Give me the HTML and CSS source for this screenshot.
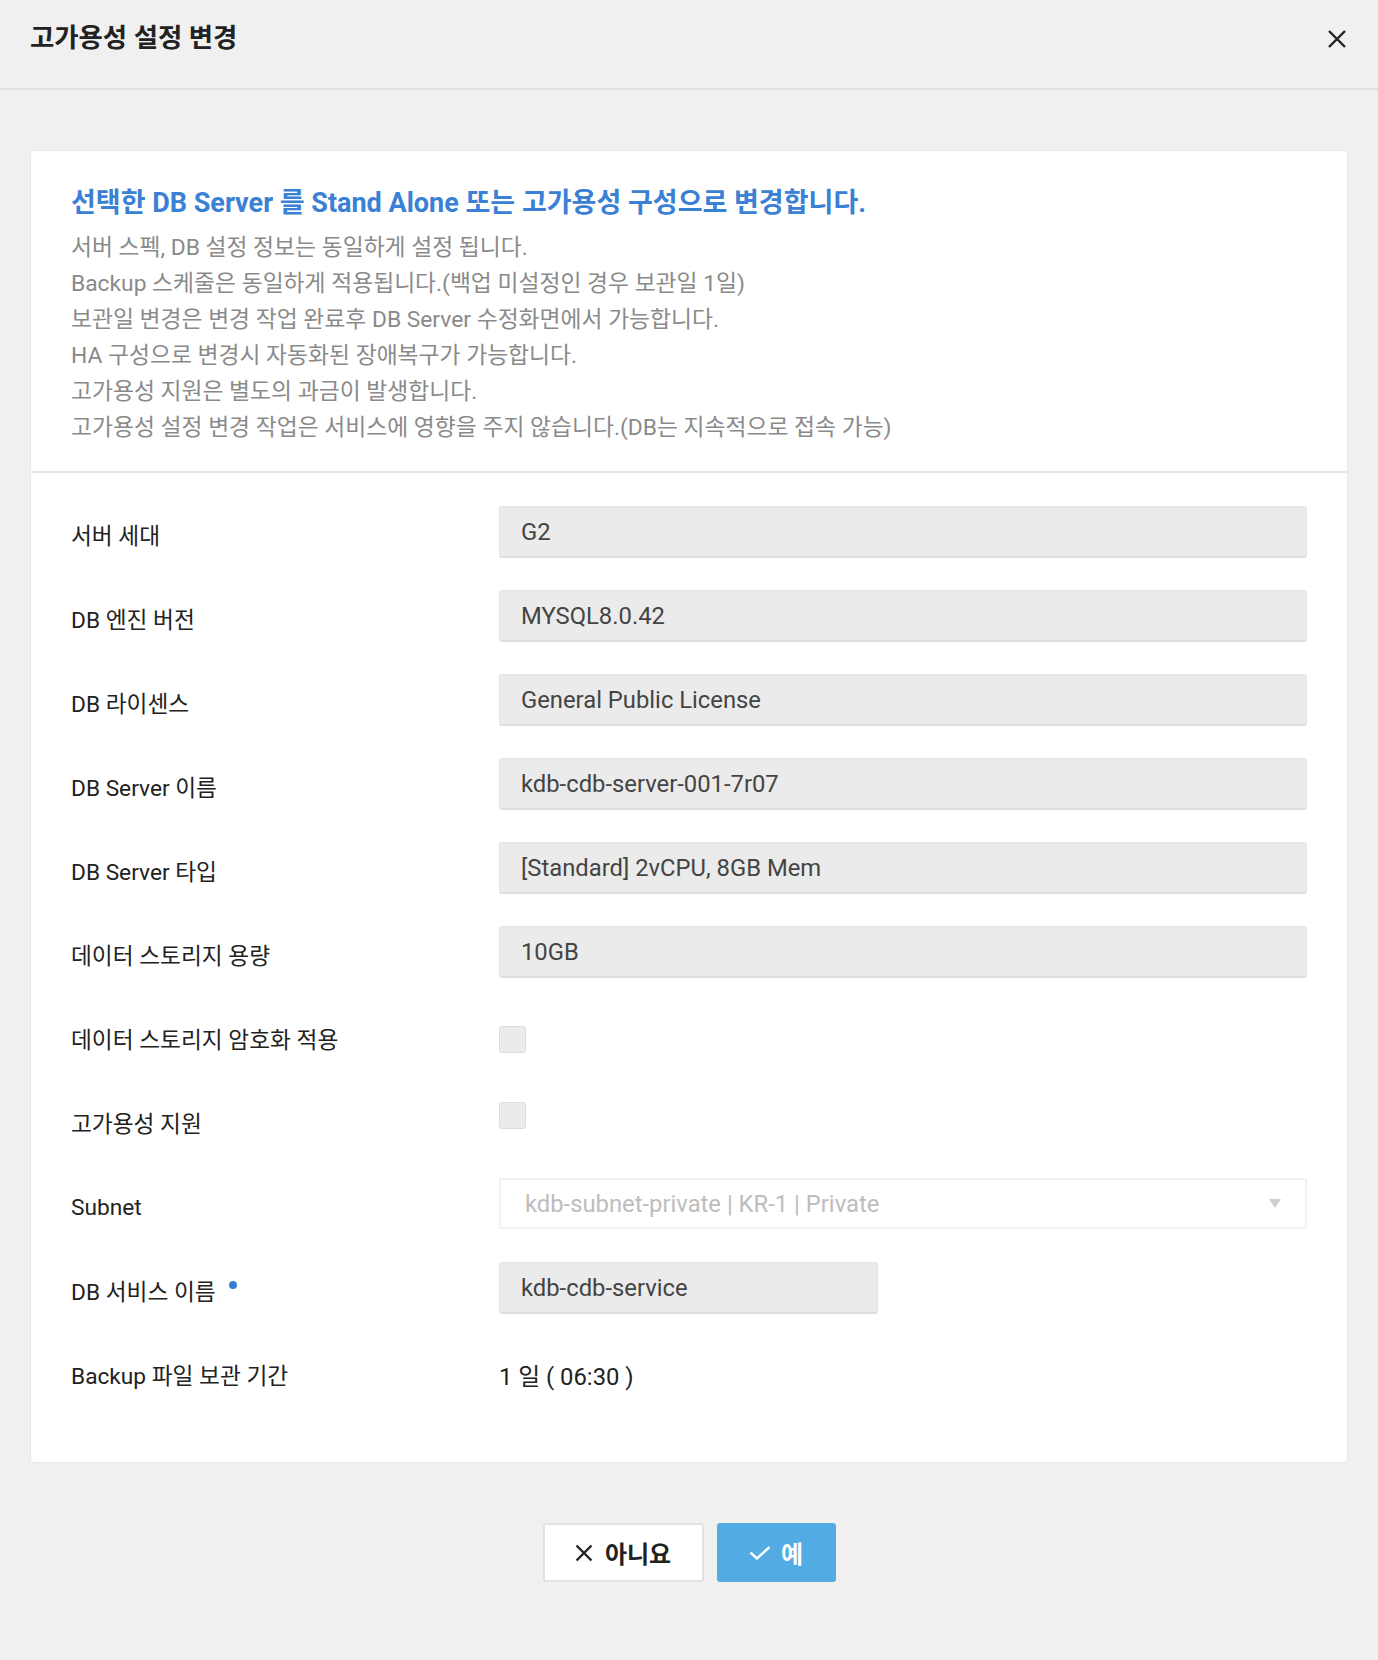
FILE: index.html
```html
<!DOCTYPE html>
<html lang="ko">
<head>
<meta charset="utf-8">
<title>고가용성 설정 변경</title>
<link rel="stylesheet" href="styles.css">
</head>
<body>
<div class="modal">
  <header class="modal-head">
    <h1 class="modal-title">고가용성 설정 변경</h1>
    <button class="close" aria-label="닫기">
      <svg viewBox="0 0 18 18" width="18" height="18"><path d="M1 1L17 17M17 1L1 17" stroke="#222" stroke-width="2.4" fill="none"/></svg>
    </button>
  </header>
  <main class="modal-body">
    <section class="card">
      <div class="card-head">
        <h2 class="notice-title">선택한 DB Server 를 Stand Alone 또는 고가용성 구성으로 변경합니다.</h2>
        <ul class="notice-list">
          <li>서버 스펙, DB 설정 정보는 동일하게 설정 됩니다.</li>
          <li>Backup 스케줄은 동일하게 적용됩니다.(백업 미설정인 경우 보관일 1일)</li>
          <li>보관일 변경은 변경 작업 완료후 DB Server 수정화면에서 가능합니다.</li>
          <li>HA 구성으로 변경시 자동화된 장애복구가 가능합니다.</li>
          <li>고가용성 지원은 별도의 과금이 발생합니다.</li>
          <li>고가용성 설정 변경 작업은 서비스에 영향을 주지 않습니다.(DB는 지속적으로 접속 가능)</li>
        </ul>
      </div>
      <div class="form">
        <div class="row"><div class="label">서버 세대</div><div class="field"><div class="input">G2</div></div></div>
        <div class="row"><div class="label">DB 엔진 버전</div><div class="field"><div class="input">MYSQL8.0.42</div></div></div>
        <div class="row"><div class="label">DB 라이센스</div><div class="field"><div class="input">General Public License</div></div></div>
        <div class="row"><div class="label">DB Server 이름</div><div class="field"><div class="input">kdb-cdb-server-001-7r07</div></div></div>
        <div class="row"><div class="label">DB Server 타입</div><div class="field"><div class="input">[Standard] 2vCPU, 8GB Mem</div></div></div>
        <div class="row"><div class="label">데이터 스토리지 용량</div><div class="field"><div class="input">10GB</div></div></div>
        <div class="row"><div class="label">데이터 스토리지 암호화 적용</div><div class="field field-top"><span class="check check-a"></span></div></div>
        <div class="row"><div class="label">고가용성 지원</div><div class="field field-top"><span class="check check-b"></span></div></div>
        <div class="row"><div class="label label-low">Subnet</div><div class="field"><div class="select"><span>kdb-subnet-private | KR-1 | Private</span><span class="caret"></span></div></div></div>
        <div class="row"><div class="label">DB 서비스 이름<span class="req"></span></div><div class="field"><div class="input input-short">kdb-cdb-service</div></div></div>
        <div class="row"><div class="label label-mid">Backup 파일 보관 기간</div><div class="field"><div class="value">1 일 ( 06:30 )</div></div></div>
      </div>
    </section>
    <div class="actions">
      <button class="btn btn-no">
        <svg viewBox="0 0 18 18" width="18" height="18"><path d="M1.5 1.5L16.5 16.5M16.5 1.5L1.5 16.5" stroke="#222" stroke-width="2.4" fill="none"/></svg>
        <span>아니요</span>
      </button>
      <button class="btn btn-yes">
        <svg viewBox="0 0 22 14" width="22" height="14"><path d="M1.5 6.5L8 12.5L20.5 1" stroke="#fff" stroke-width="2.4" fill="none"/></svg>
        <span>예</span>
      </button>
    </div>
  </main>
</div>
</body>
</html>
```
FILE: styles.css
```css
* { box-sizing: border-box; }
html, body {
  margin: 0;
  padding: 0;
  background: #f0f0f0;
  font-family: Roboto, "Noto Sans CJK KR", sans-serif;
  color: #222;
}
.modal { width: 1378px; min-height: 1660px; }
.modal-head {
  height: 90px;
  border-bottom: 2px solid #e2e2e2;
  display: flex;
  justify-content: space-between;
  align-items: flex-start;
  padding: 20px 30px 0 30px;
}
.modal-title {
  margin: 0;
  font-size: 26.4px;
  line-height: 36px;
  font-weight: 700;
  color: #222;
}
.close {
  border: 0;
  background: none;
  padding: 0;
  margin-top: 10px;
  margin-right: 2px;
  width: 18px;
  height: 18px;
  display: flex;
}
.modal-body { padding: 60px 30px 0 30px; }
.card {
  background: #fff;
  border: 1px solid #e8e8e8;
  border-radius: 4px;
}
.card-head {
  padding: 34px 40px 25px;
  border-bottom: 2px solid #e6e6e6;
}
.notice-title {
  margin: 0 0 9px;
  font-size: 27px;
  line-height: 36px;
  font-weight: 700;
  color: #3a80d4;
}
.notice-list {
  list-style: none;
  margin: 0;
  padding: 0;
  font-size: 22.8px;
  line-height: 36px;
  color: #8a8a8a;
}
.form {
  padding: 33px 40px 64px;
  display: flex;
  flex-direction: column;
  gap: 32px;
}
.row {
  display: grid;
  grid-template-columns: 428px 1fr;
  height: 52px;
}
.label {
  font-size: 22.7px;
  color: #222;
  display: flex;
  align-items: center;
  padding-top: 4px;
}
.label-low { padding-top: 7px; }
.label-mid { padding-top: 5px; }
.req {
  display: inline-block;
  width: 8px;
  height: 8px;
  border-radius: 50%;
  background: #3a7bd5;
  margin-left: 13px;
  margin-top: -10px;
}
.field { display: flex; align-items: center; }
.field-top { align-items: flex-start; }
.input {
  width: 100%;
  height: 52px;
  background: #ebebeb;
  border: 1px solid #e4e4e4;
  border-bottom: 2px solid #dedede;
  border-radius: 3px;
  padding: 0 21px;
  font-size: 23.8px;
  color: #444;
  display: flex;
  align-items: center;
}
.input-short { width: 379px; }
.check {
  width: 27px;
  height: 27px;
  background: #ebebeb;
  border: 1px solid #dcdcdc;
  border-radius: 3px;
}
.check-a { margin-top: 16px; }
.check-b { margin-top: 8px; }
.select {
  width: 100%;
  height: 51px;
  margin-top: -1px;
  background: #fff;
  border: 2px solid #f2f2f2;
  border-radius: 3px;
  padding: 0 24px 0 24px;
  font-size: 23.8px;
  color: #bdbdbd;
  display: flex;
  align-items: center;
  justify-content: space-between;
}
.caret {
  width: 0;
  height: 0;
  border-left: 6px solid transparent;
  border-right: 6px solid transparent;
  border-top: 9px solid #d0d0d0;
}
.value {
  font-size: 23.8px;
  color: #222;
  padding-top: 4px;
}
.actions {
  display: flex;
  justify-content: center;
  gap: 13px;
  padding: 60px 0 0 0;
}
.btn {
  height: 59px;
  border-radius: 3px;
  display: flex;
  align-items: center;
  justify-content: center;
  gap: 12px;
  font-family: Roboto, "Noto Sans CJK KR", sans-serif;
  font-size: 24px;
  font-weight: 700;
  padding: 0;
}
.btn-no {
  width: 161px;
  background: #fff;
  border: 2px solid #e2e2e2;
  color: #222;
}
.btn-yes {
  width: 119px;
  background: #52abe3;
  border: 0;
  color: #fff;
  gap: 10px;
}
```
